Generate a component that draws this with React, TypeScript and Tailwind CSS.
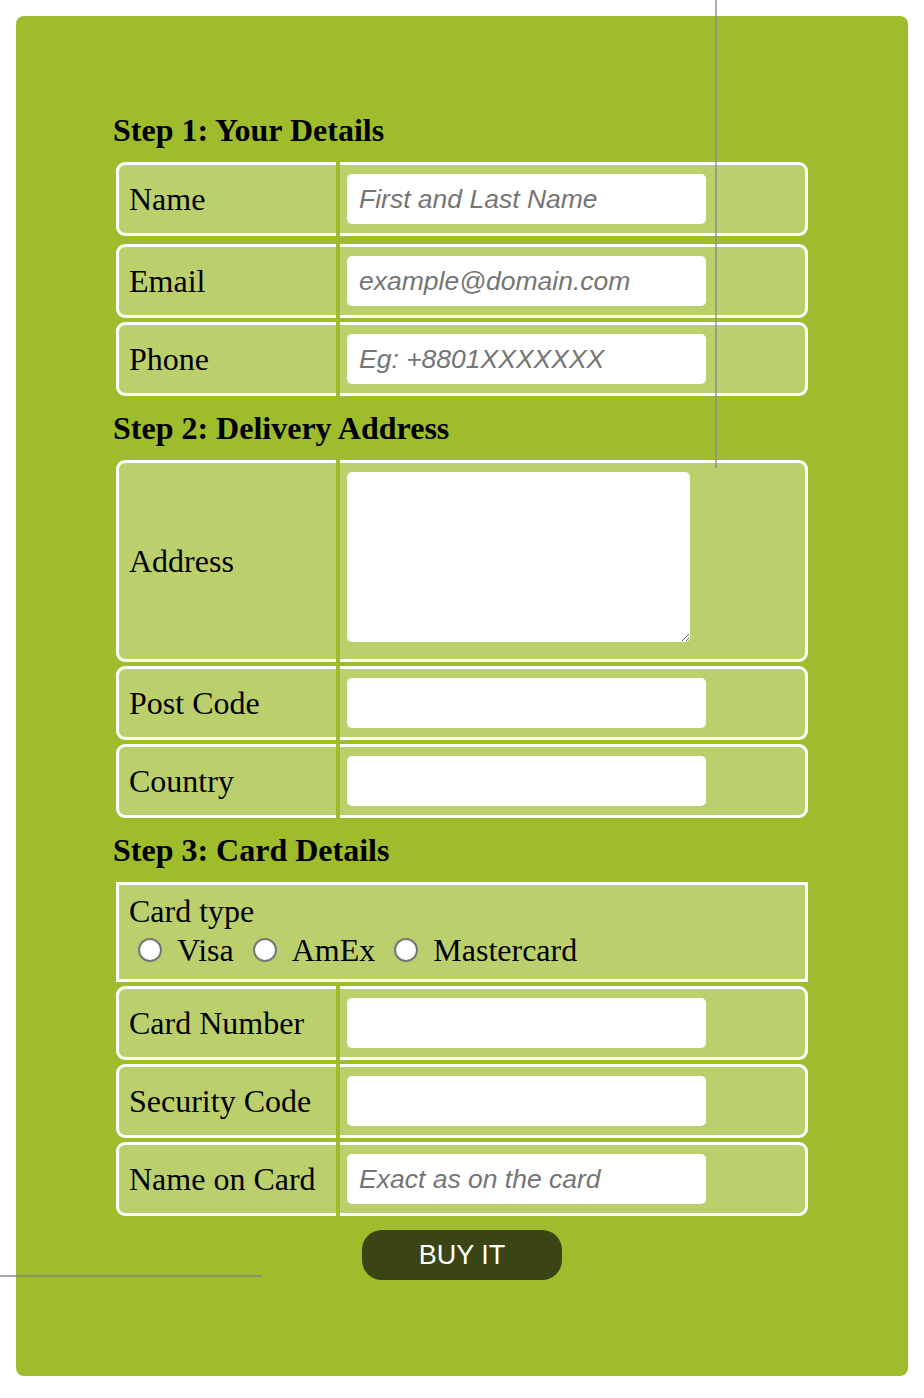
import React from 'react'

const serif = "font-['Liberation_Serif','Times_New_Roman',serif]"
const sans = "font-['Liberation_Sans',Arial,sans-serif]"

type Field = { label: string; placeholder?: string; area?: boolean }

const step1: Field[] = [
  { label: 'Name', placeholder: 'First and Last Name' },
  { label: 'Email', placeholder: 'example@domain.com' },
  { label: 'Phone', placeholder: 'Eg: +8801XXXXXXX' },
]

const step2: Field[] = [
  { label: 'Address', area: true },
  { label: 'Post Code' },
  { label: 'Country' },
]

const step3: Field[] = [
  { label: 'Card Number' },
  { label: 'Security Code' },
  { label: 'Name on Card', placeholder: 'Exact as on the card' },
]

const Row: React.FC<{ field: Field; className?: string }> = ({ field, className = '' }) => (
  <li
    className={`flex items-center border-[3px] border-white rounded-[9px] bg-[#bbd06c] ${
      field.area ? 'h-[202px]' : 'h-[74px]'
    } ${className}`}
  >
    <label className={`w-[228px] shrink-0 pl-[10px] text-[32px] leading-[36px] text-black ${serif}`}>
      {field.label}
    </label>
    {field.area ? (
      <textarea
        className={`self-start mt-[9px] w-[343px] h-[170px] rounded-[5px] bg-white border-0 outline-none px-3 text-[22px] ${sans}`}
      />
    ) : (
      <input
        type="text"
        placeholder={field.placeholder}
        className={`w-[359px] h-[50px] rounded-[5px] bg-white border-0 outline-none px-[12px] text-[26.5px] italic placeholder:text-[#757575] ${sans}`}
      />
    )}
  </li>
)

const Divider = () => (
  <div className="absolute left-[220px] top-0 bottom-0 w-[4px] bg-[#9ebc2c] pointer-events-none" />
)

const Heading: React.FC<{ children: React.ReactNode; className?: string }> = ({ children, className = '' }) => (
  <h2 className={`ml-[-3px] h-[36px] text-[32px] leading-[36px] font-bold text-black ${serif} ${className}`}>
    {children}
  </h2>
)

const Radio: React.FC<{ label: string; first?: boolean }> = ({ label, first }) => (
  <label className={`flex items-center ${first ? 'ml-[9px]' : 'ml-[19px]'}`}>
    <input
      type="radio"
      name="cardtype"
      className="appearance-none w-[24px] h-[24px] rounded-full border-2 border-[#767676] bg-white m-0"
    />
    <span className="ml-[15px]">{label}</span>
  </label>
)

export default function App() {
  return (
    <div className="relative bg-white p-4 min-h-[1398px]">
      <form className="rounded-[8px] bg-[#9ebc2c] px-[100px] pt-[96px] pb-[96px]">
        <Heading>Step 1: Your Details</Heading>
        <ol className="relative mt-[14px] flex flex-col">
          <Row field={step1[0]} className="mb-[8px]" />
          <Row field={step1[1]} className="mb-[4px]" />
          <Row field={step1[2]} />
          <Divider />
        </ol>

        <Heading className="mt-[14px]">Step 2: Delivery Address</Heading>
        <ol className="relative mt-[14px] flex flex-col gap-[4px]">
          {step2.map((f) => (
            <Row key={f.label} field={f} />
          ))}
          <Divider />
        </ol>

        <Heading className="mt-[14px]">Step 3: Card Details</Heading>
        <ol className="relative mt-[14px] flex flex-col gap-[4px]">
          <li
            className={`h-[100px] border-[3px] border-white bg-[#bbd06c] pl-[10px] pt-[8px] text-[32px] leading-[36px] text-black ${serif}`}
          >
            <div>Card type</div>
            <div className="mt-[3px] flex items-center">
              <Radio label="Visa" first />
              <Radio label="AmEx" />
              <Radio label="Mastercard" />
            </div>
          </li>
          <div className="relative flex flex-col gap-[4px]">
            {step3.map((f) => (
              <Row key={f.label} field={f} />
            ))}
            <Divider />
          </div>
        </ol>

        <div className="mt-[14px] flex justify-center">
          <button
            type="button"
            className={`w-[200px] h-[50px] rounded-[20px] bg-[#3a4414] text-white text-[27px] ${sans}`}
          >
            BUY IT
          </button>
        </div>
      </form>

      {/* stray guide lines over the page */}
      <div className="absolute left-[715px] top-0 w-[2px] h-[468px] bg-[rgba(140,140,140,0.7)] pointer-events-none" />
      <div className="absolute left-0 top-[1275px] w-[262px] h-[2px] bg-[rgba(130,130,130,0.7)] pointer-events-none" />
    </div>
  )
}
